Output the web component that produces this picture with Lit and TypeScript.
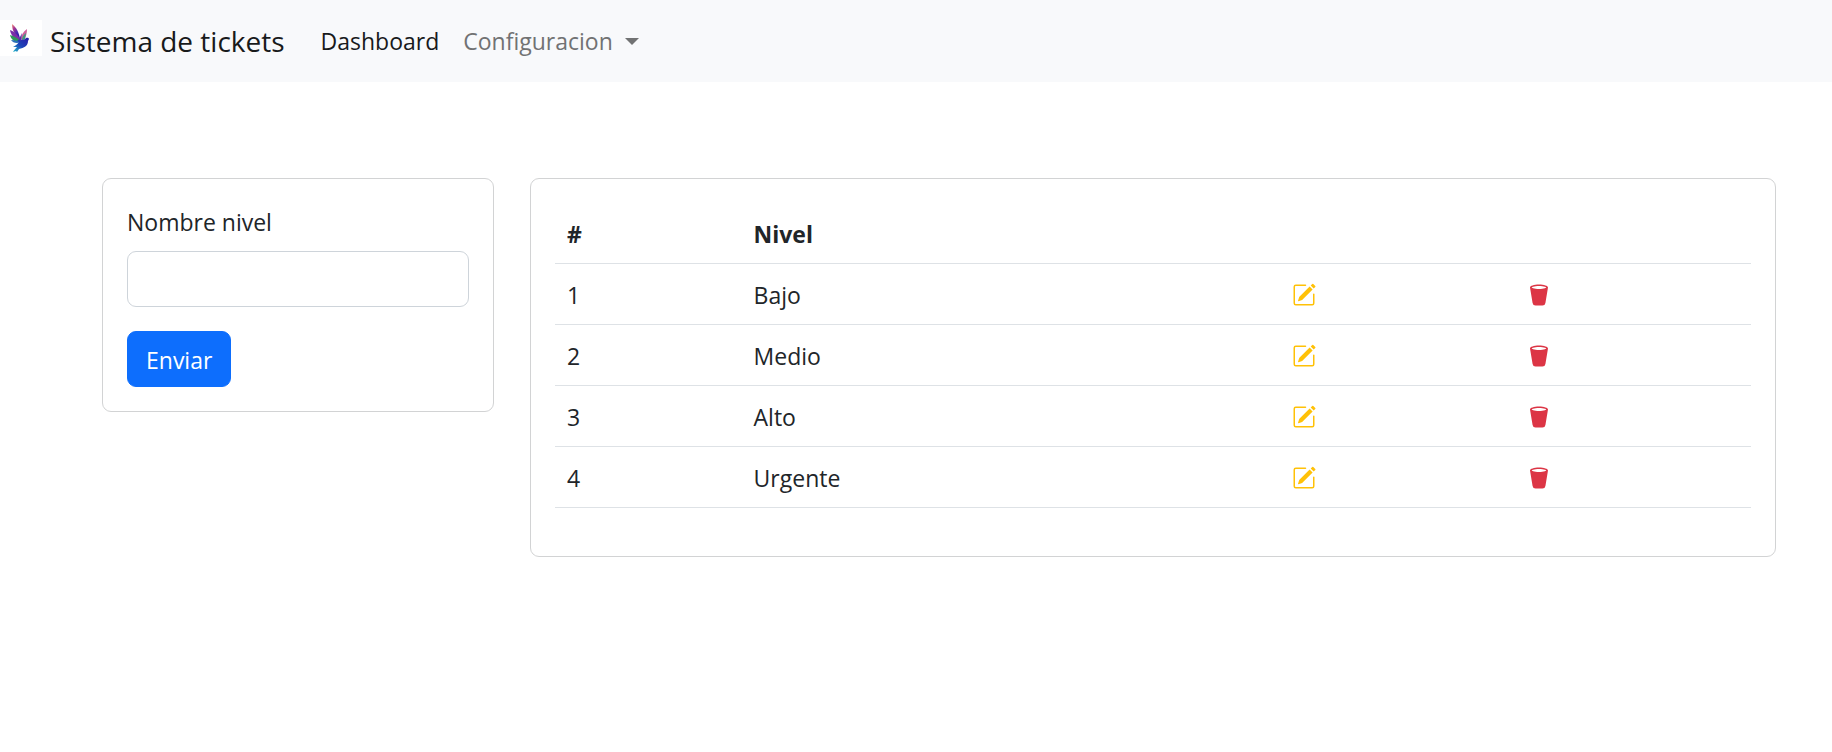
import { LitElement, html, css } from "lit";
import { customElement, state } from "lit/decorators.js";

interface Level {
  id: number;
  name: string;
}

const logo = html`<svg class="logo" viewBox="0 0 42 36" aria-hidden="true">
  <defs>
    <linearGradient id="wing" x1="0" y1="0" x2="0.6" y2="1">
      <stop offset="0" stop-color="#f2a07c" />
      <stop offset="0.3" stop-color="#b23a8c" />
      <stop offset="0.65" stop-color="#4f2bb0" />
      <stop offset="1" stop-color="#2216a4" />
    </linearGradient>
    <linearGradient id="tail" x1="1" y1="0" x2="0" y2="1">
      <stop offset="0" stop-color="#2a18a8" />
      <stop offset="0.55" stop-color="#1d46b8" />
      <stop offset="1" stop-color="#27bccb" />
    </linearGradient>
  </defs>
  <rect width="42" height="36" fill="#fff" />
  <path d="M12 4c4 3 7 8 8 15l-5-5c-2-3-3-6-3-10z" fill="url(#wing)" />
  <path d="M10 10c5 2 9 6 11 11-6-1-10-5-11-11z" fill="#7b2fa8" />
  <path d="M10 15c4 1 8 3 11 7-5 1-10-2-11-7z" fill="#2e9a58" />
  <path d="M11 20c4 0 7 1 10 2-4 2-8 1-10-2z" fill="#2b6fb8" />
  <path d="M27 9c-4 3-6 6-6 10l3 1c2-3 3-7 3-11z" fill="#d0609c" />
  <path d="M26 13c-3 2-4 5-4 7l3-1z" fill="#3f9a7c" />
  <path d="M17 21c3-3 6 0 8-2 1-1 3-2 4 0l-1 2c0 5-4 7-9 8l-2 3-1-1-3 1c1-2 3-4 4-5l-4 0c3-2 5-3 6-5z" fill="url(#tail)" />
  <path d="M19 19l3-6-1 8z" fill="#5b2ca8" />
</svg>`;

const pencilIcon = html`<svg class="icon" viewBox="0 0 16 16" fill="currentColor" aria-hidden="true">
  <path d="M15.502 1.94a.5.5 0 0 1 0 .706L14.459 3.69l-2-2L13.502.646a.5.5 0 0 1 .707 0l1.293 1.293zm-1.75 2.456-2-2L4.939 9.21a.5.5 0 0 0-.121.196l-.805 2.414a.25.25 0 0 0 .316.316l2.414-.805a.5.5 0 0 0 .196-.12l6.813-6.814z" />
  <path fill-rule="evenodd" d="M1 13.5A1.5 1.5 0 0 0 2.5 15h11a1.5 1.5 0 0 0 1.5-1.5v-6a.5.5 0 0 0-1 0v6a.5.5 0 0 1-.5.5h-11a.5.5 0 0 1-.5-.5v-11a.5.5 0 0 1 .5-.5H9a.5.5 0 0 0 0-1H2.5A1.5 1.5 0 0 0 1 2.5z" />
</svg>`;

const trashIcon = html`<svg class="icon" viewBox="0 0 16 16" fill="currentColor" aria-hidden="true">
  <path d="M2.037 3.225A.7.7 0 0 1 2 3c0-1.105 2.686-2 6-2s6 .895 6 2a.7.7 0 0 1-.037.225l-1.684 10.104A2 2 0 0 1 10.305 15H5.694a2 2 0 0 1-1.973-1.671zm9.89-.69C10.966 2.214 9.578 2 8 2c-1.58 0-2.968.215-3.926.534-.477.16-.795.327-.975.466.18.14.498.307.975.466C5.032 3.786 6.42 4 8 4s2.967-.215 3.926-.534c.477-.16.795-.327.975-.466-.18-.14-.498-.307-.975-.466z" />
</svg>`;

@customElement("app-root")
export class AppRoot extends LitElement {
  static styles = css`
    :host {
      display: block;
      min-height: 100vh;
      background: #fff;
      color: #212529;
      font-family: "Segoe UI", "Open Sans", "Noto Sans", sans-serif;
      font-size: 23px;
      line-height: 36px;
    }
    *,
    *::before,
    *::after {
      box-sizing: border-box;
    }
    .navbar {
      display: flex;
      align-items: center;
      min-height: 82px;
      background: #f8f9fb;
    }
    .brand {
      display: flex;
      align-items: center;
      gap: 8px;
      margin-right: 24px;
      color: #181a1b;
      font-size: 28px;
      text-decoration: none;
      white-space: nowrap;
    }
    .logo {
      width: 42px;
      height: 36px;
      margin-bottom: 6px;
    }
    .links {
      display: flex;
      margin: 0;
      padding: 0;
      list-style: none;
    }
    .link {
      display: flex;
      align-items: center;
      padding: 12px;
      border: 0;
      background: none;
      color: #717273;
      font: inherit;
      text-decoration: none;
      cursor: pointer;
    }
    .link.active {
      color: #181a1b;
    }
    .caret {
      margin-left: 12px;
      border-top: 7px solid;
      border-right: 7px solid transparent;
      border-left: 7px solid transparent;
    }
    .content {
      display: grid;
      grid-template-columns: minmax(0, 392fr) minmax(0, 1246fr);
      align-items: start;
      gap: 36px;
      padding: 96px 56px 48px 102px;
    }
    .card {
      padding: 24px;
      border: 1px solid #d2d3d4;
      border-radius: 9px;
      background: #fff;
    }
    .label {
      display: block;
      padding: 1px 0 11px;
    }
    .field {
      display: block;
      width: 100%;
      margin-bottom: 24px;
      padding: 9px 18px;
      border: 1px solid #ced4da;
      border-radius: 9px;
      background: #fff;
      color: inherit;
      font: inherit;
    }
    .submit {
      display: block;
      padding: 10px 18px 8px;
      border: 1px solid #0d6efd;
      border-radius: 9px;
      background: #0d6efd;
      color: #fff;
      font: inherit;
      cursor: pointer;
    }
    .table {
      width: 100%;
      margin-bottom: 24px;
      border-collapse: separate;
      border-spacing: 0;
      table-layout: fixed;
    }
    .col-id {
      width: 15.6%;
    }
    .col-name {
      width: 45%;
    }
    .cell {
      height: 61px;
      padding: 13px 12px 11px;
      border-bottom: 1px solid #dee2e6;
      text-align: left;
    }
    .head {
      font-weight: 700;
    }
    .action {
      display: block;
      padding: 0;
      border: 0;
      background: none;
      cursor: pointer;
    }
    .edit {
      color: #ffc107;
    }
    .remove {
      color: #dc3545;
    }
    .icon {
      display: block;
      width: 24px;
      height: 24px;
    }
  `;

  @state() private levels: Level[] = [
    { id: 1, name: "Bajo" },
    { id: 2, name: "Medio" },
    { id: 3, name: "Alto" },
    { id: 4, name: "Urgente" },
  ];

  private addLevel(event: Event) {
    event.preventDefault();
    const form = event.target as HTMLFormElement;
    const name = String(new FormData(form).get("name") ?? "").trim();
    if (!name) return;
    const id = Math.max(0, ...this.levels.map((level) => level.id)) + 1;
    this.levels = [...this.levels, { id, name }];
    form.reset();
  }

  private removeLevel(id: number) {
    this.levels = this.levels.filter((level) => level.id !== id);
  }

  render() {
    return html`
      <nav class="navbar">
        <a class="brand" href="#">${logo}<span>Sistema de tickets</span></a>
        <ul class="links">
          <li><a class="link active" href="#" aria-current="page">Dashboard</a></li>
          <li>
            <button class="link" type="button" aria-haspopup="true">
              Configuracion<span class="caret"></span>
            </button>
          </li>
        </ul>
      </nav>
      <main class="content">
        <form class="card" @submit=${this.addLevel}>
          <label class="label" for="level-name">Nombre nivel</label>
          <input class="field" id="level-name" name="name" type="text" />
          <button class="submit" type="submit">Enviar</button>
        </form>
        <section class="card">
          <table class="table">
            <colgroup>
              <col class="col-id" />
              <col class="col-name" />
              <col />
              <col />
            </colgroup>
            <thead>
              <tr>
                <th class="cell head" scope="col">#</th>
                <th class="cell head" scope="col">Nivel</th>
                <td class="cell"></td>
                <td class="cell"></td>
              </tr>
            </thead>
            <tbody>
              ${this.levels.map(
                (level) => html`<tr>
                  <td class="cell">${level.id}</td>
                  <td class="cell">${level.name}</td>
                  <td class="cell">
                    <button class="action edit" type="button" aria-label="Editar">${pencilIcon}</button>
                  </td>
                  <td class="cell">
                    <button class="action remove" type="button" aria-label="Eliminar" @click=${() => this.removeLevel(level.id)}>
                      ${trashIcon}
                    </button>
                  </td>
                </tr>`,
              )}
            </tbody>
          </table>
        </section>
      </main>
    `;
  }
}
